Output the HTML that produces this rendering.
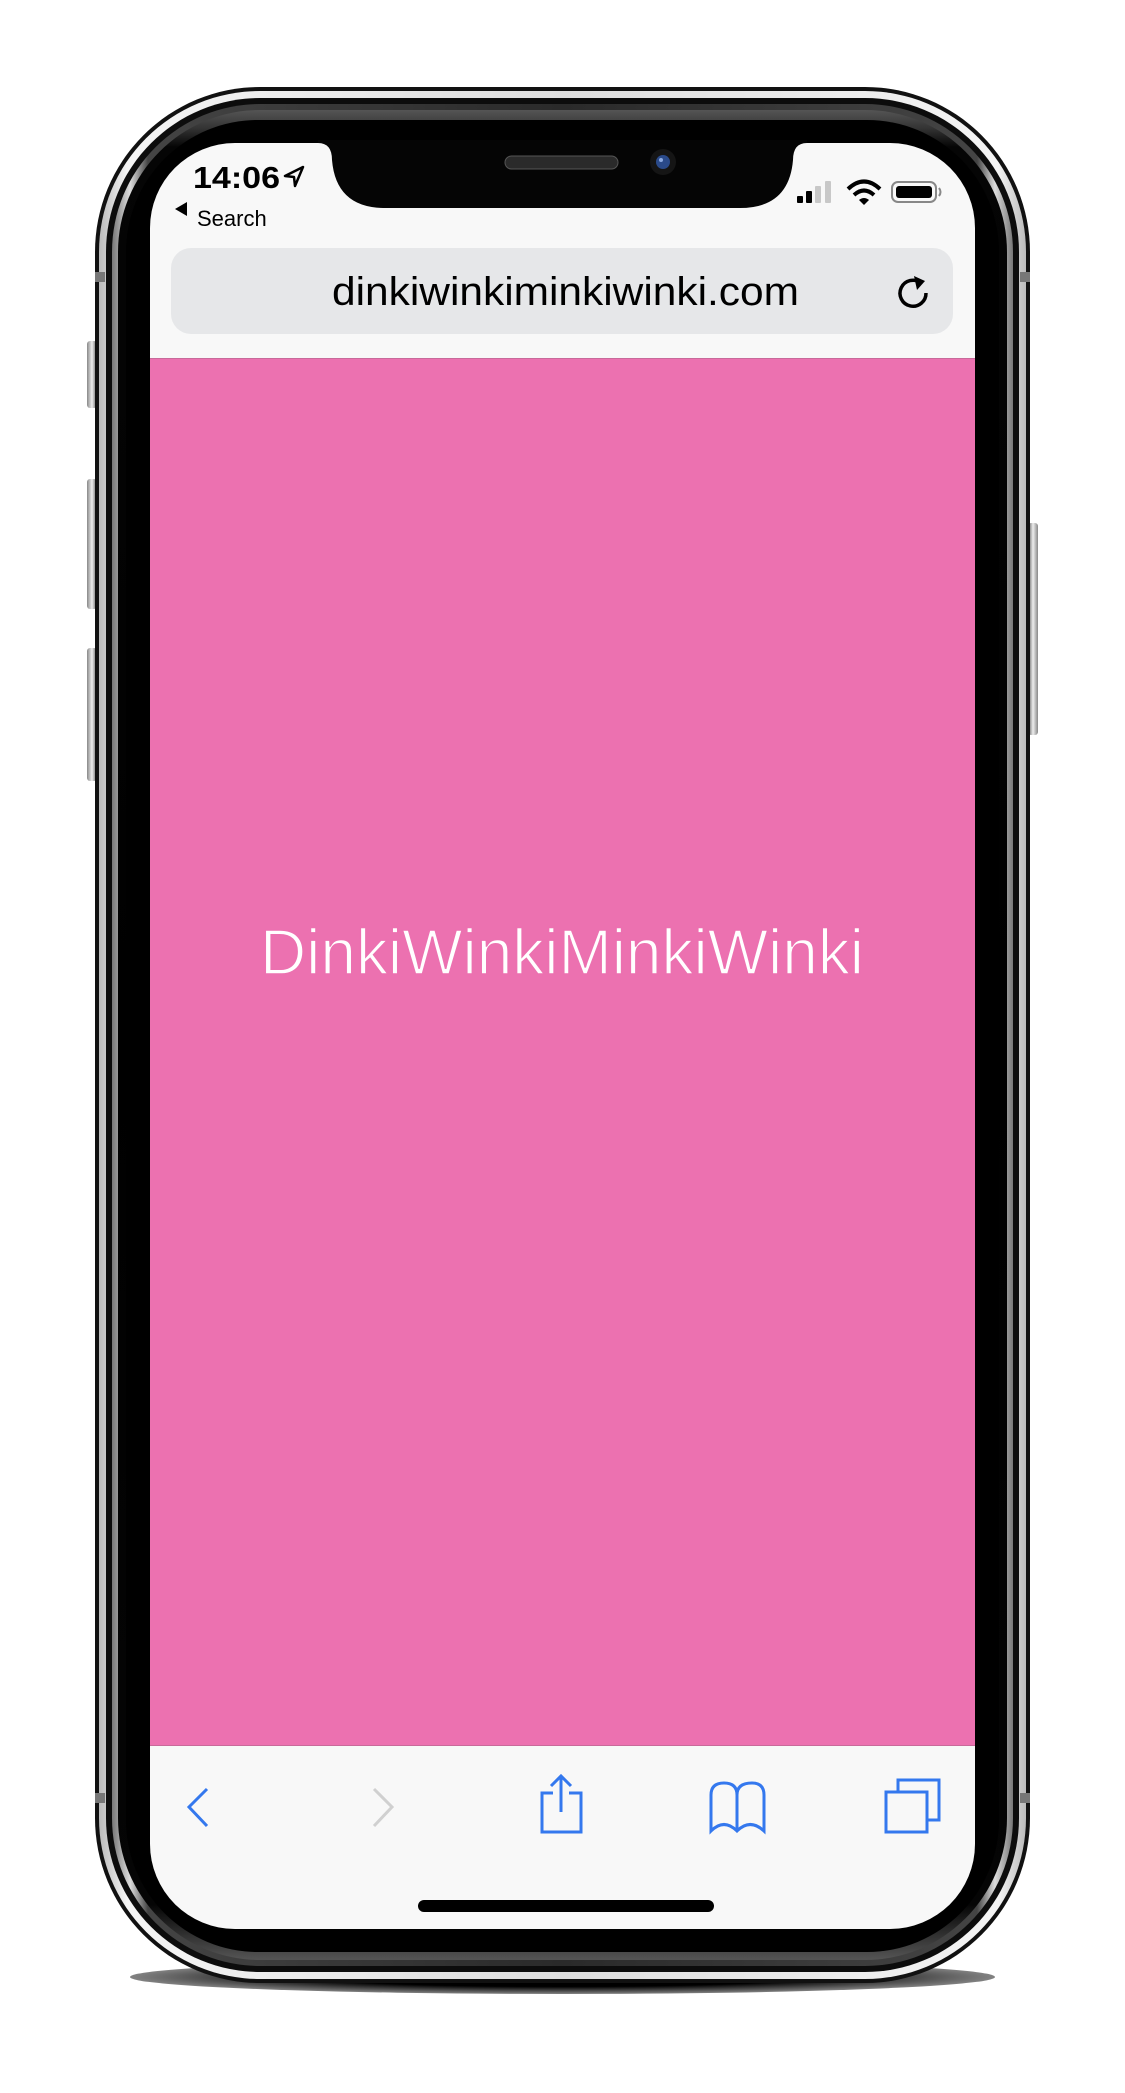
<!DOCTYPE html>
<html><head><meta charset="utf-8"><style>
html,body{margin:0;padding:0;background:#fff;}
body{width:1125px;height:2093px;position:relative;overflow:hidden;font-family:"Liberation Sans",sans-serif;}
.a{position:absolute;}
</style></head><body>
<!-- shadow -->
<div class="a" style="left:130px;top:1960px;width:865px;height:34px;border-radius:50%;background:radial-gradient(ellipse at center,#000 40%,rgba(0,0,0,0.5) 70%,rgba(0,0,0,0) 100%);"></div>
<!-- side buttons -->
<div class="a" style="left:87px;top:341px;width:10px;height:67px;background:linear-gradient(90deg,#888,#eee,#555);border-radius:3px;"></div>
<div class="a" style="left:87px;top:479px;width:10px;height:130px;background:linear-gradient(90deg,#888,#eee,#555);border-radius:3px;"></div>
<div class="a" style="left:87px;top:648px;width:10px;height:133px;background:linear-gradient(90deg,#888,#eee,#555);border-radius:3px;"></div>
<div class="a" style="left:1028px;top:523px;width:10px;height:212px;background:linear-gradient(90deg,#555,#eee,#888);border-radius:3px;"></div>
<!-- frame -->
<div class="a" style="left:95px;top:87px;width:935px;height:1896px;border-radius:165px;background:#111;"></div>
<div class="a" style="left:99px;top:91px;width:927px;height:1888px;border-radius:161px;background:linear-gradient(90deg,#bbb,#f4f4f4 3%,#ddd 50%,#f4f4f4 97%,#bbb);"></div>
<div class="a" style="left:106px;top:98px;width:913px;height:1874px;border-radius:154px;background:#0c0c0c;"></div>
<div class="a" style="left:112px;top:104px;width:901px;height:1862px;border-radius:148px;background:linear-gradient(90deg,#777,#ddd 2%,#444 4%,#2a2a2a 50%,#444 96%,#ddd 98%,#777);"></div>
<div class="a" style="left:118px;top:110px;width:889px;height:1850px;border-radius:142px;background:linear-gradient(180deg,#555 0,#333 1%,#050505 2%,#000 50%,#050505 97%,#3a3a3a 99%,#555 100%);"></div>
<div class="a" style="left:126px;top:120px;width:873px;height:1832px;border-radius:132px;background:#000;"></div>
<!-- antenna marks -->
<div class="a" style="left:95px;top:272px;width:10px;height:10px;background:#777;"></div>
<div class="a" style="left:1020px;top:272px;width:10px;height:10px;background:#777;"></div>
<div class="a" style="left:95px;top:1793px;width:10px;height:10px;background:#777;"></div>
<div class="a" style="left:1020px;top:1793px;width:10px;height:10px;background:#777;"></div>
<!-- screen -->
<div class="a" style="left:150px;top:143px;width:825px;height:1786px;border-radius:85px;background:#f8f8f8;overflow:hidden;">
  <div class="a" style="left:0;top:215px;width:825px;height:1388px;background:#ec71b0;border-top:1px solid #c86a9a;border-bottom:1px solid #c86a9a;box-sizing:border-box;"></div>
  <div class="a" style="left:21px;top:105px;width:782px;height:86px;border-radius:20px;background:#e6e7e9;"></div>
</div>
<svg class="a" style="left:0;top:0;" width="1125" height="2093" viewBox="0 0 1125 2093">
  <path d="M318 140 L318 143 Q332 143 332 160 Q336 208 385 208 L740 208 Q789 208 793 160 Q793 143 807 143 L807 140 Z" fill="#050505"/>
  <rect x="505" y="156" width="113" height="13" rx="6.5" fill="#2a2a2a" stroke="#555" stroke-width="1"/>
  <circle cx="663" cy="162" r="13" fill="#151515"/><circle cx="663" cy="162" r="7" fill="#2a4a8a"/><circle cx="661" cy="160" r="2" fill="#8aa8e0"/>
  <text x="193" y="188" font-size="31" font-weight="bold" fill="#000" textLength="87" lengthAdjust="spacingAndGlyphs">14:06</text>
  <path d="M303 167 L285 176 L294 177 L295 186 Z" fill="none" stroke="#000" stroke-width="2.5" stroke-linejoin="round"/>
  <path d="M175 209 L187 202 L187 216 Z" fill="#000"/>
  <text x="197" y="226" font-size="22" fill="#000">Search</text>
  <rect x="797" y="196" width="6" height="7" rx="1" fill="#000"/>
  <rect x="806" y="191" width="6" height="12" rx="1" fill="#000"/>
  <rect x="815" y="186" width="6" height="17" rx="1" fill="#c8c8c8"/>
  <rect x="825" y="181" width="6" height="22" rx="1" fill="#c8c8c8"/>
  <path d="M848 189 Q864 174 880 189" fill="none" stroke="#000" stroke-width="4"/>
  <path d="M854 195 Q864 186 874 195" fill="none" stroke="#000" stroke-width="4"/>
  <path d="M859 200 L864 205 L869 200 Q864 196 859 200Z" fill="#000"/>
  <rect x="892" y="182" width="44" height="20" rx="6" fill="none" stroke="#888" stroke-width="2"/>
  <rect x="896" y="186" width="36" height="12" rx="3" fill="#000"/>
  <path d="M939 188 Q942 192 939 196" fill="none" stroke="#888" stroke-width="2"/>
  <text x="332" y="305" font-size="40" fill="#000" textLength="467" lengthAdjust="spacingAndGlyphs">dinkiwinkiminkiwinki.com</text>
  <path d="M921 283 A13 13 0 1 0 926 293" fill="none" stroke="#000" stroke-width="3.5"/>
  <path d="M914 276 L925 281 L917 290 Z" fill="#000"/>
  <text x="260" y="974" font-size="64" fill="#fff" stroke="#ec71b0" stroke-width="1.6" textLength="604" lengthAdjust="spacingAndGlyphs">DinkiWinkiMinkiWinki</text>
  <g fill="none" stroke="#3478ee" stroke-width="3">
    <path d="M207 1789 L189 1807 L207 1826"/>
    <path d="M553 1793 L542 1793 L542 1832 L581 1832 L581 1793 L569 1793"/>
    <path d="M561 1812 L561 1776 M551 1786 L561 1776 L571 1786"/>
    <path d="M737 1830 L737 1795 Q737 1783 752 1783 Q764 1783 764 1795 L764 1831 Q750 1818 737 1831 Q724 1818 711 1831 L711 1795 Q711 1783 724 1783 Q737 1783 737 1795"/>
    <path d="M898 1792 L898 1780 L939 1780 L939 1820 L927 1820"/>
    <rect x="886" y="1792" width="41" height="40"/>
  </g>
  <path d="M374 1789 L392 1807 L374 1826" fill="none" stroke="#d0d0d0" stroke-width="3"/>
  <rect x="418" y="1900" width="296" height="12" rx="6" fill="#000"/>
</svg>
</body></html>
